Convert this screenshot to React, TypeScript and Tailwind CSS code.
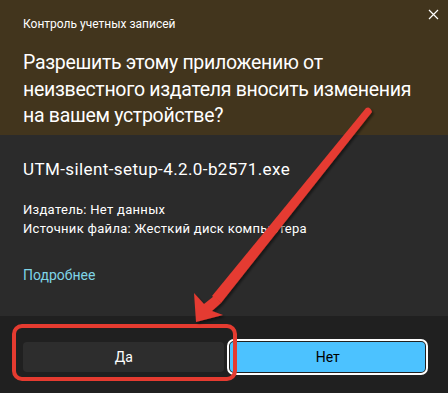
import React from 'react';

const App: React.FC = () => {
  return (
    <div
      className="relative w-[448px] h-[393px] overflow-hidden bg-[#202020] text-white"
      style={{ fontFamily: 'Roboto, "Noto Sans", sans-serif' }}
    >
      <div className="bg-[#42351d] h-[135px] px-[23px] pt-[16px] relative">
        <p className="text-[12px] leading-[16px]">Контроль учетных записей</p>
        <button className="absolute right-[7px] top-[6px] w-[16px] h-[16px] flex items-center justify-center">
          <svg width="11" height="11" viewBox="0 0 11 11" stroke="#ffffff" strokeWidth="1.2">
            <path d="M1 1 L10 10 M10 1 L1 10" />
          </svg>
        </button>
        <h1 className="mt-[18px] text-[19.5px] leading-[26.5px] tracking-[-0.3px] font-normal">
          Разрешить этому приложению от неизвестного издателя вносить изменения на вашем устройстве?
        </h1>
      </div>

      <div className="bg-[#2b2b2b] h-[181px] px-[23px] pt-[22px]">
        <p className="text-[17px] leading-[24px] tracking-[0.4px]">UTM-silent-setup-4.2.0-b2571.exe</p>
        <div className="mt-[19px] text-[13px] leading-[19px] tracking-[0.3px]">
          <p>Издатель: Нет данных</p>
          <p>Источник файла: Жесткий диск компьютера</p>
        </div>
        <p className="mt-[28px] text-[14px] leading-[19px] text-[#7fd4e6]">Подробнее</p>
      </div>

      <div className="flex gap-[6px] px-[23px] pt-[26px]">
        <button className="w-[203px] h-[30px] rounded-[4px] bg-[#2d2d2d] text-[14px] text-white">Да</button>
        <button className="w-[196px] h-[30px] rounded-[4px] bg-[#4cc2ff] text-[14px] text-black outline-2 outline-white outline-offset-[1px]">
          Нет
        </button>
      </div>

      <svg className="absolute inset-0 pointer-events-none" width="448" height="393" viewBox="0 0 448 393">
        <defs>
          <filter id="sh" x="-20%" y="-20%" width="140%" height="140%">
            <feDropShadow dx="2" dy="2" stdDeviation="1" floodColor="#000000" floodOpacity="0.45" />
          </filter>
        </defs>
        <rect x="14" y="326" width="221" height="53" rx="8" fill="none" stroke="#e53b30" strokeWidth="4" />
        <g filter="url(#sh)" fill="#e53b30">
          <path d="M366 108 Q370 106 372 112 L221 303 L212 296 Z" />
          <path d="M196 322 L194 293 L204 304 L214 296 L221 303 L212 311 L223 315 Z" />
        </g>
      </svg>
    </div>
  );
};

export default App;
